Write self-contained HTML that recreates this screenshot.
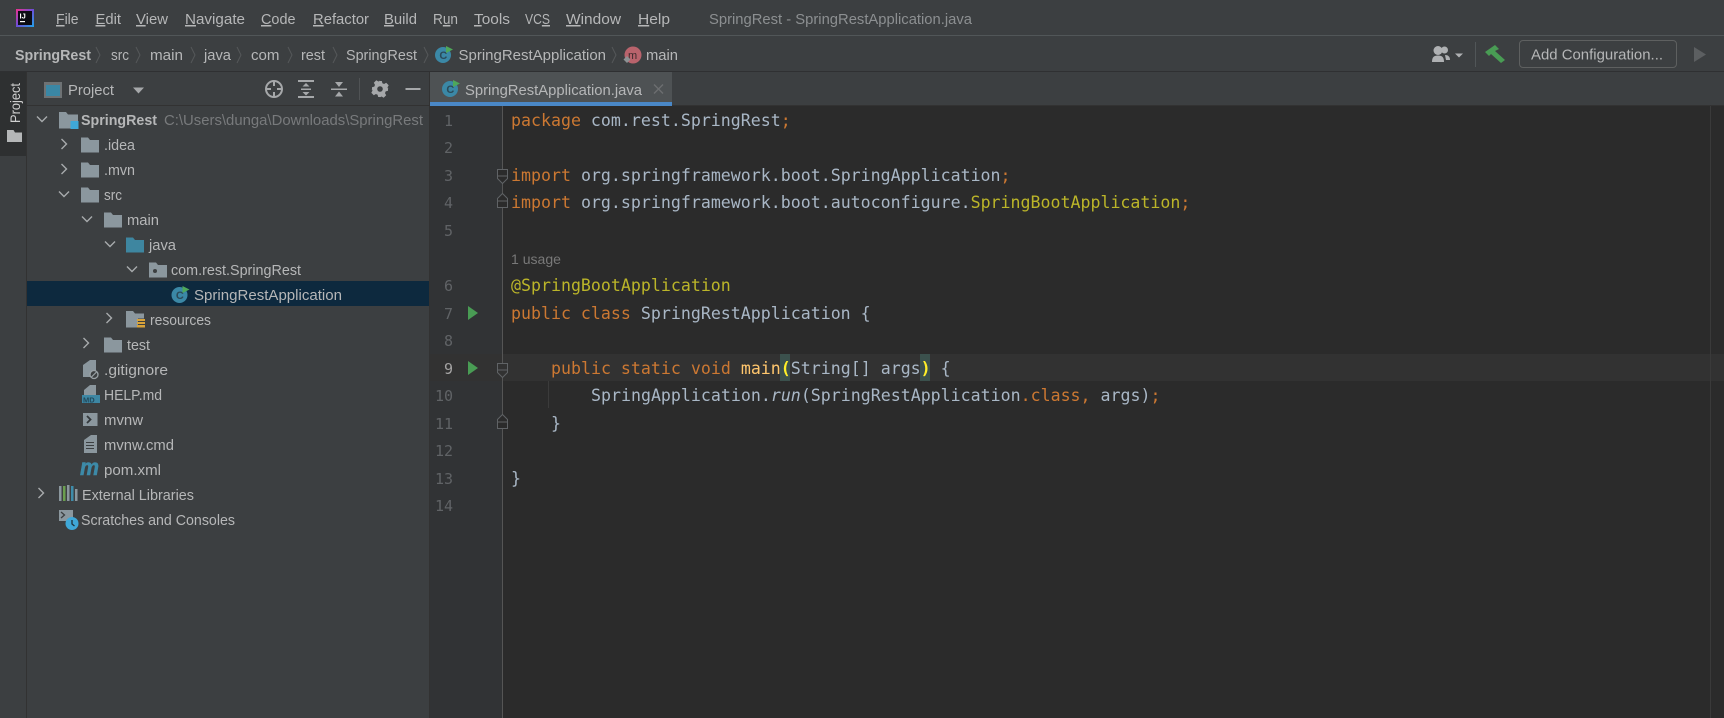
<!DOCTYPE html>
<html lang="en"><head><meta charset="utf-8"><title>SpringRest - SpringRestApplication.java</title>
<style>
html,body{margin:0;padding:0;background:#3c3f41;width:1724px;height:718px;overflow:hidden}
svg{display:block}
.u{font-family:"Liberation Sans",sans-serif;font-size:15px;fill:#b6b7b8}
.c{font-family:"DejaVu Sans Mono","Liberation Mono",monospace;font-size:16.6px;fill:#a9b7c6;white-space:pre}
.k{fill:#cc7832}.a{fill:#bbb529}.m{fill:#ffc66d}
.n{font-family:"DejaVu Sans Mono","Liberation Mono",monospace;font-size:15px;fill:#606366;text-anchor:end}
.ul{text-decoration:underline}
</style></head><body>
<svg width="1724" height="718" viewBox="0 0 1724 718" xmlns="http://www.w3.org/2000/svg">
<defs>
<path id="fo" d="M0 0h7l2 2.500h9v12.500H0z" fill="#8b979e"/>
<g id="cl"><circle r="8" cy="1" fill="#3b88a6"/><text x="-3.600" y="5" font-family="Liberation Sans,sans-serif" font-size="11" font-weight="bold" fill="#2b4a58">C</text><path d="M3-8l7 3.500-7 3.500z" fill="#4ea85a"/></g>
<path id="cd" d="M-5-2.500l5 5 5-5" fill="none" stroke="#a8abad" stroke-width="1.400"/>
<path id="cr" d="M-2.500-5l5 5-5 5" fill="none" stroke="#a8abad" stroke-width="1.400"/>
<path id="bc" d="M-2-8l4 8-4 8" fill="none" stroke="#55585a" stroke-width="1"/>
<linearGradient id="lg" x1="0" y1="0" x2="1" y2="1"><stop offset="0" stop-color="#f0318c"/><stop offset=".5" stop-color="#6a4fd8"/><stop offset="1" stop-color="#1fa4e8"/></linearGradient>
</defs>

<!-- top chrome -->
<rect width="1724" height="718" fill="#3c3f41"/>
<rect y="35" width="1724" height="1" fill="#515658"/>
<rect y="71" width="1724" height="1" fill="#2f3032"/>

<!-- logo -->
<rect x="16" y="9" width="18" height="18" fill="url(#lg)"/>
<rect x="18" y="11" width="14" height="14" fill="#0c0c14"/>
<text x="19.500" y="18.500" font-family="Liberation Sans,sans-serif" font-size="7.500" font-weight="bold" fill="#fff">IJ</text>
<rect x="20" y="21" width="5" height="1.200" fill="#fff"/>

<!-- menu -->
<g class="u">
<text x="56" y="24" textLength="22.600" lengthAdjust="spacingAndGlyphs"><tspan class="ul">F</tspan>ile</text>
<text x="95.500" y="24" textLength="25.500" lengthAdjust="spacingAndGlyphs"><tspan class="ul">E</tspan>dit</text>
<text x="136" y="24" textLength="32" lengthAdjust="spacingAndGlyphs"><tspan class="ul">V</tspan>iew</text>
<text x="185" y="24" textLength="60" lengthAdjust="spacingAndGlyphs"><tspan class="ul">N</tspan>avigate</text>
<text x="261" y="24" textLength="34.500" lengthAdjust="spacingAndGlyphs"><tspan class="ul">C</tspan>ode</text>
<text x="313" y="24" textLength="56" lengthAdjust="spacingAndGlyphs"><tspan class="ul">R</tspan>efactor</text>
<text x="384" y="24" textLength="33" lengthAdjust="spacingAndGlyphs"><tspan class="ul">B</tspan>uild</text>
<text x="433" y="24" textLength="25" lengthAdjust="spacingAndGlyphs">R<tspan class="ul">u</tspan>n</text>
<text x="474" y="24" textLength="36" lengthAdjust="spacingAndGlyphs"><tspan class="ul">T</tspan>ools</text>
<text x="525" y="24" textLength="25" lengthAdjust="spacingAndGlyphs">VC<tspan class="ul">S</tspan></text>
<text x="566" y="24" textLength="55" lengthAdjust="spacingAndGlyphs"><tspan class="ul">W</tspan>indow</text>
<text x="638" y="24" textLength="32" lengthAdjust="spacingAndGlyphs"><tspan class="ul">H</tspan>elp</text>
<text x="709" y="24" textLength="263" lengthAdjust="spacingAndGlyphs" style="fill:#8c8f91">SpringRest - SpringRestApplication.java</text>
</g>

<!-- breadcrumb -->
<g class="u">
<text x="15" y="60" textLength="76" lengthAdjust="spacingAndGlyphs" font-weight="bold">SpringRest</text>
<text x="111" y="60" textLength="18" lengthAdjust="spacingAndGlyphs">src</text>
<text x="150" y="60" textLength="33" lengthAdjust="spacingAndGlyphs">main</text>
<text x="204" y="60" textLength="27" lengthAdjust="spacingAndGlyphs">java</text>
<text x="251" y="60" textLength="28.500" lengthAdjust="spacingAndGlyphs">com</text>
<text x="301" y="60" textLength="24" lengthAdjust="spacingAndGlyphs">rest</text>
<text x="346" y="60" textLength="71" lengthAdjust="spacingAndGlyphs">SpringRest</text>
<text x="458.500" y="60" textLength="147.500" lengthAdjust="spacingAndGlyphs">SpringRestApplication</text>
<text x="646" y="60" textLength="32" lengthAdjust="spacingAndGlyphs">main</text>
</g>
<use href="#bc" x="98" y="55"/><use href="#bc" x="138" y="55"/><use href="#bc" x="193" y="55"/><use href="#bc" x="239" y="55"/><use href="#bc" x="290" y="55"/><use href="#bc" x="335" y="55"/><use href="#bc" x="426" y="55"/><use href="#bc" x="614" y="55"/>
<use href="#cl" x="443" y="54"/>
<circle cx="633" cy="55" r="8.500" fill="#b9636c"/>
<text x="628" y="59" font-family="Liberation Sans,sans-serif" font-size="11" fill="#3c2a2c">m</text>
<path d="M627 56l3.500 3.500-3.500 3.500-3.500-3.500z" fill="#8d9194"/>

<!-- right toolbar -->
<g fill="#afb1b3">
<circle cx="1438" cy="50.500" r="4.500"/><path d="M1432 62c0-5 2-6.500 6-6.500s6 1.500 6 6.500z"/>
<circle cx="1444.500" cy="50" r="3.500"/><path d="M1445 55c3 0 5 1.500 5 5h-4z"/>
<path d="M1455 53.500h8l-4 4z"/>
</g>
<rect x="1475" y="42" width="1" height="25" fill="#515658"/>
<path d="M1485 52l10-7 4 4-4 2 10 9-4 3-10-9-2 2z" fill="#499c54"/>
<rect x="1519.500" y="40.500" width="157" height="27" rx="3.500" fill="#3c3f41" stroke="#5e6060"/>
<text class="u" x="1531" y="59.500" textLength="132" lengthAdjust="spacingAndGlyphs">Add Configuration...</text>
<path d="M1694 47l12 7.500-12 7.500z" fill="#5c5f61"/>

<!-- left strip -->
<rect x="0" y="72" width="26" height="646" fill="#3c3f41"/>
<rect x="0" y="72" width="26" height="84" fill="#2e3031"/>
<rect x="26" y="72" width="1" height="646" fill="#323232"/>
<text class="u" transform="translate(20 123) rotate(-90)" textLength="40" lengthAdjust="spacingAndGlyphs" style="font-size:14px;fill:#d0d0d0">Project</text>
<path d="M7 130h6.500l1.500 2.500h7V142H7z" fill="#b5b7b8"/>

<!-- project toolbar -->
<rect x="27" y="105" width="403" height="1" fill="#323232"/>
<rect x="429" y="72" width="1" height="646" fill="#323232"/>
<rect x="44" y="82" width="18" height="16" fill="#6e7274"/>
<rect x="46" y="85" width="14" height="11" fill="#3a87a5"/>
<text class="u" x="68" y="95" textLength="46" lengthAdjust="spacingAndGlyphs">Project</text>
<path d="M133 87.500h11l-5.500 6z" fill="#a6a8aa"/>
<g fill="none" stroke="#a6a8aa" stroke-width="2">
<circle cx="274" cy="89" r="8"/>
<path d="M274 81v5M274 92v5M266 89h5M277 89h5"/>
</g>
<g fill="#a6a8aa">
<rect x="298" y="80" width="16" height="2"/><rect x="298" y="96" width="16" height="2"/><rect x="301" y="88.500" width="10" height="1.500"/>
<path d="M306 83l3.500 3.500h-7zM306 95.500l3.500-3.500h-7z"/>
<rect x="331" y="88.500" width="16" height="1.500"/>
<path d="M339 87l-4-5h8zM339 91.500l4 5h-8z"/>
</g>
<rect x="359" y="78" width="1" height="22" fill="#505355"/>
<g transform="translate(380 89)" fill="#a6a8aa">
<path fill-rule="evenodd" d="M-1.800-8h3.600l.6 2.300 1.700.7 2.100-1.200 2.500 2.500-1.200 2.100.7 1.700L8-1.800v3.600l-2.300.6-.7 1.700 1.200 2.100-2.500 2.500-2.100-1.200-1.700.7L-.2 8h-1.600l-.6-2.300-1.700-.7-2.100 1.200-2.500-2.500 1.200-2.100-.7-1.700L-8 1.800v-3.600l2.300-.6.7-1.700-1.200-2.100 2.500-2.500 2.100 1.200 1.700-.7zM0-2.800a2.800 2.800 0 1 0 0 5.600 2.800 2.800 0 1 0 0-5.600z"/>
</g>
<rect x="405.500" y="88" width="15" height="2" fill="#a6a8aa"/>

<!-- tree -->
<rect x="27" y="281" width="402" height="25" fill="#0d293e"/>
<use href="#cd" x="42" y="119"/><use href="#cr" x="64" y="144"/><use href="#cr" x="64" y="169"/>
<use href="#cd" x="64" y="194"/><use href="#cd" x="87" y="219"/><use href="#cd" x="110" y="244"/>
<use href="#cd" x="132" y="269"/><use href="#cr" x="109" y="318"/><use href="#cr" x="86" y="343"/>
<use href="#cr" x="41" y="493"/>

<path d="M59 112h7l2 2.500h10v14H59z" fill="#8b979e"/><rect x="70.500" y="121" width="8" height="8" fill="#3fa8d8"/>
<use href="#fo" x="81" y="137.500"/><use href="#fo" x="81" y="162.500"/><use href="#fo" x="81" y="187.500"/>
<use href="#fo" x="104" y="212.500"/>
<path d="M126 237.500h7l2 2.500h9v12.500h-18z" fill="#3e86a0"/>
<path d="M149 262.500h7l2 2.500h9v12.500h-18z" fill="#8b979e"/><circle cx="155" cy="271" r="2" fill="#3c3f41"/>
<use href="#cl" x="179.500" y="294"/>
<path d="M126 311h7l2 2.500h9v5h-6v9h-12z" fill="#8b979e"/>
<path d="M137 319h8v2h-8zM137 322h8v2h-8zM137 325h8v2.500h-8z" fill="#d8a33a"/>
<use href="#fo" x="104" y="337.500"/>
<path d="M90 360h6v11a5 5 0 0 0-4 6h-9v-12z" fill="#8b979e"/>
<circle cx="94" cy="374.500" r="4" fill="#3c3f41" stroke="#9aa2a6" stroke-width="1.300"/><path d="M91.500 377l5-5" stroke="#9aa2a6" stroke-width="1.200"/>
<path d="M90 385h6v10H84v-5z" fill="#8b979e"/>
<rect x="82" y="395" width="18" height="8" fill="#3d87a4"/>
<text x="83" y="402.500" font-family="Liberation Sans,sans-serif" font-size="7.500" font-weight="bold" fill="#23485a">MD</text>
<rect x="83" y="413" width="14.500" height="13" fill="#8b979e"/><path d="M87 416l3.500 3.500-3.500 3.500" fill="none" stroke="#33383b" stroke-width="1.800"/>
<path d="M91 435h6v18H84v-13z" fill="#8b979e"/><path d="M86 442.500h8M86 445.500h8M86 448.500h8" stroke="#3c3f41" stroke-width="1"/>
<text x="80" y="475" font-family="Liberation Sans,sans-serif" font-size="23" font-weight="bold" font-style="italic" fill="#3d8aa8" stroke="#3d8aa8" stroke-width=".6" textLength="19" lengthAdjust="spacingAndGlyphs">m</text>
<path d="M59 486h2.500v15H59z" fill="#8b979e"/><rect x="63" y="486" width="2.500" height="15" fill="#6a9e4f"/><rect x="67" y="485" width="2.500" height="16" fill="#8b979e"/><rect x="71" y="486" width="2.500" height="15" fill="#3e8caa"/><rect x="75" y="489" width="2.500" height="12" fill="#8b979e"/>
<path d="M59 510h14v11H59z" fill="#8b979e"/><path d="M61 512l3.500 3-3.500 3" fill="none" stroke="#3c3f41" stroke-width="1.300"/>
<circle cx="72" cy="523.500" r="6.500" fill="#3fa8d8"/><path d="M72 520v4l2.500 2" fill="none" stroke="#20323c" stroke-width="1.300"/>

<g class="u">
<text x="81" y="125" textLength="76" lengthAdjust="spacingAndGlyphs" font-weight="bold">SpringRest</text>
<text x="164" y="125" textLength="259" lengthAdjust="spacingAndGlyphs" style="fill:#787a7c">C:\Users\dunga\Downloads\SpringRest</text>
<text x="104" y="150" textLength="31" lengthAdjust="spacingAndGlyphs">.idea</text>
<text x="104" y="175" textLength="31" lengthAdjust="spacingAndGlyphs">.mvn</text>
<text x="104" y="200" textLength="18" lengthAdjust="spacingAndGlyphs">src</text>
<text x="127" y="225" textLength="32" lengthAdjust="spacingAndGlyphs">main</text>
<text x="149" y="250" textLength="27" lengthAdjust="spacingAndGlyphs">java</text>
<text x="171" y="275" textLength="130" lengthAdjust="spacingAndGlyphs">com.rest.SpringRest</text>
<text x="194" y="300" textLength="148" lengthAdjust="spacingAndGlyphs">SpringRestApplication</text>
<text x="150" y="325" textLength="61" lengthAdjust="spacingAndGlyphs">resources</text>
<text x="127" y="350" textLength="23" lengthAdjust="spacingAndGlyphs">test</text>
<text x="104" y="375" textLength="64" lengthAdjust="spacingAndGlyphs">.gitignore</text>
<text x="104" y="400" textLength="58" lengthAdjust="spacingAndGlyphs">HELP.md</text>
<text x="104" y="425" textLength="39" lengthAdjust="spacingAndGlyphs">mvnw</text>
<text x="104" y="450" textLength="70" lengthAdjust="spacingAndGlyphs">mvnw.cmd</text>
<text x="104" y="475" textLength="57" lengthAdjust="spacingAndGlyphs">pom.xml</text>
<text x="82" y="500" textLength="112" lengthAdjust="spacingAndGlyphs">External Libraries</text>
<text x="81" y="525" textLength="154" lengthAdjust="spacingAndGlyphs">Scratches and Consoles</text>
</g>

<!-- tab bar -->
<rect x="430" y="72" width="242" height="30" fill="#4e5254"/>
<rect x="430" y="102" width="242" height="4" fill="#4a88c7"/>
<rect x="672" y="105" width="1052" height="1" fill="#323232"/>
<use href="#cl" x="450" y="88"/>
<text class="u" x="465" y="95" textLength="177" lengthAdjust="spacingAndGlyphs">SpringRestApplication.java</text>
<path d="M654 84.500l9 9M663 84.500l-9 9" stroke="#6c6f71" stroke-width="1.300"/>

<!-- editor -->
<rect x="430" y="106" width="1294" height="612" fill="#2b2b2b"/>
<rect x="430" y="106" width="72" height="612" fill="#313335"/>
<rect x="502" y="354" width="1222" height="27" fill="#323232"/>
<rect x="430" y="354" width="72" height="27" fill="#323232"/>
<rect x="502" y="106" width="1" height="612" fill="#555555"/>
<rect x="1710" y="106" width="1" height="612" fill="#3a3a3a"/>
<rect x="548" y="381" width="1" height="27" fill="#3b3b3b"/>
<rect x="780" y="354" width="10" height="27" fill="#3b514d"/>
<rect x="920" y="354" width="10" height="27" fill="#3b514d"/>

<g class="n">
<text x="453" y="126">1</text><text x="453" y="153">2</text><text x="453" y="181">3</text><text x="453" y="208">4</text><text x="453" y="236">5</text>
<text x="453" y="291">6</text><text x="453" y="319">7</text><text x="453" y="346">8</text><text x="453" y="374" style="fill:#a4a3a3">9</text>
<text x="453" y="401">10</text><text x="453" y="429">11</text><text x="453" y="456">12</text><text x="453" y="484">13</text><text x="453" y="511">14</text>
</g>
<path d="M468 306l10 7-10 7z" fill="#499c54"/><path d="M468 361l10 7-10 7z" fill="#499c54"/>
<g fill="#2b2b2b" stroke="#606366" stroke-width="1">
<path d="M497.500 169.500h10v9l-5 5-5-5zM497.500 176h10" />
<path d="M497.500 207.500h10v-9l-5-5-5 5zM497.500 201h10"/>
<path d="M497.500 363.500h10v9l-5 5-5-5zM497.500 370h10" fill="#323232"/>
<path d="M497.500 428.500h10v-9l-5-5-5 5zM497.500 422h10"/>
</g>

<text class="c" x="511" y="126" xml:space="preserve"><tspan class="k">package</tspan> com.rest.SpringRest<tspan class="k">;</tspan></text>
<text class="c" x="511" y="181" xml:space="preserve"><tspan class="k">import</tspan> org.springframework.boot.SpringApplication<tspan class="k">;</tspan></text>
<text class="c" x="511" y="208" xml:space="preserve"><tspan class="k">import</tspan> org.springframework.boot.autoconfigure.<tspan class="a">SpringBootApplication</tspan><tspan class="k">;</tspan></text>
<text x="511" y="264" font-family="Liberation Sans,sans-serif" font-size="13.500" fill="#787878" textLength="50" lengthAdjust="spacingAndGlyphs">1 usage</text>
<text class="c" x="511" y="291" style="fill:#bbb529">@SpringBootApplication</text>
<text class="c" x="511" y="319" xml:space="preserve"><tspan class="k">public class</tspan> SpringRestApplication {</text>
<text class="c" x="551" y="374" xml:space="preserve"><tspan class="k">public static void</tspan> <tspan class="m">main</tspan><tspan font-weight="bold" style="fill:#ffef28">(</tspan>String[] args<tspan font-weight="bold" style="fill:#ffef28">)</tspan> {</text>
<text class="c" x="591" y="401" xml:space="preserve">SpringApplication.<tspan font-style="italic">run</tspan>(SpringRestApplication<tspan class="k">.class,</tspan> args)<tspan class="k">;</tspan></text>
<text class="c" x="551" y="429">}</text>
<text class="c" x="511" y="484">}</text>
</svg>
</body></html>
